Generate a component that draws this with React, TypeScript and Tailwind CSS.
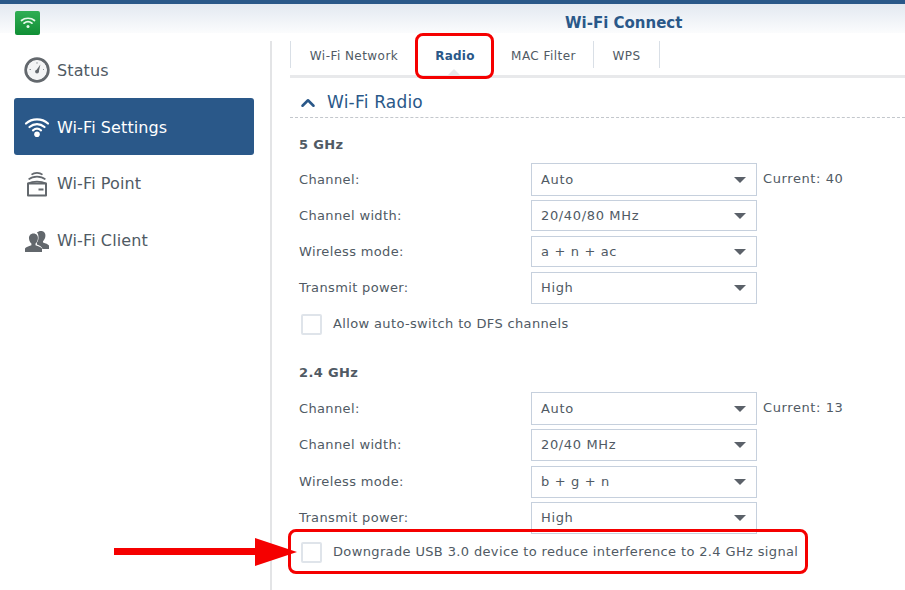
import { ChevronUp } from "lucide-react";

function Gauge() {
  return (
    <svg width="26" height="26" viewBox="0 0 26 26" fill="none">
      <circle cx="13" cy="13" r="11.3" stroke="#63686d" strokeWidth="2.8" />
      <circle cx="13" cy="13" r="9.6" fill="#f3f4f5" />
      <path d="M11.6 14.2 16.4 7.6 14.6 15.2Z" fill="#63686d" />
      <circle cx="13" cy="14.6" r="1.9" fill="#63686d" />
      <path d="M5.5 12.5h1.5M13 5.2v1.5M20 12.5h-1" stroke="#8b9095" strokeWidth="1" />
    </svg>
  );
}

function WifiIcon() {
  return (
    <svg width="26" height="22" viewBox="0 0 26 22" fill="none" stroke="#fff" strokeWidth="2.2" strokeLinecap="round">
      <path d="M2 7.5C8 2 18 2 24 7.5" />
      <path d="M5.5 11C10 7.2 16 7.2 20.5 11" />
      <path d="M9 14.3C11.4 12.4 14.6 12.4 17 14.3" />
      <circle cx="13" cy="18.2" r="2.8" fill="#fff" stroke="none" />
    </svg>
  );
}

function PointIcon() {
  return (
    <svg width="22" height="26" viewBox="0 0 22 26" fill="none">
      <path d="M5.5 3.6C8.5 1.2 13.5 1.2 16.5 3.6" stroke="#63686d" strokeWidth="1.7" />
      <path d="M2.6 8.4C7 4.8 15 4.8 19.4 8.4" stroke="#63686d" strokeWidth="1.7" />
      <path d="M2 12.5V24.6H20V12.5Z" stroke="#63686d" strokeWidth="2" strokeLinejoin="round" fill="#fff" />
      <path d="M2 12.5C7 10 15 10 20 12.5" stroke="#63686d" strokeWidth="1.6" />
      <rect x="12.5" y="17.5" width="5" height="2" fill="#63686d" />
    </svg>
  );
}

function ClientIcon() {
  return (
    <svg width="24" height="22" viewBox="0 0 24 22" fill="#62676c">
      <path d="M16 1c3 0 4.6 2.2 4.4 5-.2 2.4-1.2 4.2-2.4 5.2v1.4c2.6.8 5.2 1.8 6 3V19h-6.5c-.4-2-3-3.4-5.6-4.4v-2.2c1.2-1.2 1.6-3 1.6-5 0-2.2-.6-3.8-1.6-4.8C13 1.6 14.4 1 16 1Z" />
      <path d="M8.5 3.4c3 0 4.6 2.2 4.4 5-.2 2.4-1.2 4.2-2.4 5.2v1.6c2.8.8 5.6 2 6.5 3.2V22H0v-3.6c.9-1.2 3.6-2.4 6.4-3.2v-1.6C5.2 12.6 4.2 10.8 4 8.4c-.2-2.8 1.5-5 4.5-5Z" />
    </svg>
  );
}

function SideItem({ icon, label, active, cls, textCls }: { icon: React.ReactNode; label: string; active?: boolean; cls: string; textCls?: string }) {
  return (
    <div className={`flex items-center rounded-[3px] w-[240px] ${cls} ${active ? "bg-[#2a5889] text-white" : "text-[#505a64]"}`}>
      <div className="w-[43px] flex justify-center pl-[2px] shrink-0">{icon}</div>
      <span className={`text-[16px] tracking-[0.1px] ${textCls ?? ""}`}>{label}</span>
    </div>
  );
}

function Row({ label, value, cls, current }: { label: string; value: string; cls: string; current?: string }) {
  return (
    <div className={`flex items-center ${cls}`}>
      <div className="w-[241px] pl-[9px] text-[#505a64]">{label}</div>
      <div className="w-[226px] h-full border border-[#c6d0dd] flex items-center justify-between pl-[9px] pr-[10px] text-[#505a64]">
        <span className="tracking-[0.65px]">{value}</span>
        <span className="w-0 h-0 border-x-[6px] border-x-transparent border-t-[6px] border-t-[#5b6169]" />
      </div>
      {current && <div className="ml-[6px] text-[#505a64] -mt-[2px] tracking-[0.6px]">{current}</div>}
    </div>
  );
}

function Check({ label, cls }: { label: string; cls: string }) {
  return (
    <div className={`flex items-center pl-[11px] ${cls}`}>
      <span className="w-[21px] h-[21px] border-2 border-[#dfe4ea] rounded-[2px] bg-white shrink-0" />
      <span className="ml-[11px] text-[#505a64]">{label}</span>
    </div>
  );
}

function Tab({ label, cls }: { label: string; cls: string }) {
  return (
    <div className={`h-[27px] pt-[2px] flex items-center justify-center text-[12px] tracking-[0.45px] text-[#505a64] border-l border-[#d9dfe6] ${cls}`}>{label}</div>
  );
}

export default function App() {
  return (
    <div className="relative w-[905px] h-[590px] overflow-hidden bg-white font-['DejaVu_Sans','Liberation_Sans',sans-serif] text-[13px] tracking-[0.36px]">
      {/* Title bar */}
      <div className="h-[4px] bg-[#2a5889]" />
      <div className="relative h-[29px] bg-gradient-to-b from-[#e3e9f1] to-[#fbfcfd]">
        <div className="absolute left-[15px] top-[7px] w-[25px] h-[24px] rounded-[2px] bg-gradient-to-b from-[#2fae54] to-[#0f8f35] flex items-center justify-center">
          <svg width="18" height="14" viewBox="0 0 18 14" fill="none" stroke="#e8f8ea" strokeWidth="1.7" strokeLinecap="round">
            <path d="M2.5 4.5C6 1.5 12 1.5 15.5 4.5" />
            <path d="M5 7.2C7.4 5.4 10.6 5.4 13 7.2" />
            <circle cx="9" cy="10.5" r="1.5" fill="#e8f8ea" stroke="none" />
          </svg>
        </div>
        <div className="pl-[565px] pt-[9px] text-[15px] leading-[20px] font-bold tracking-normal text-[#2a5889]">Wi-Fi Connect</div>
      </div>

      <div className="flex pt-[8px]">
        {/* Sidebar */}
        <div className="w-[272px] h-[549px] border-r-2 border-[#e3e4e6] pl-[14px] shrink-0">
          <SideItem cls="h-[57px]" textCls="pt-[2px]" icon={<Gauge />} label="Status" />
          <SideItem cls="h-[57px]" textCls="pt-[2px]" active icon={<WifiIcon />} label="Wi-Fi Settings" />
          <SideItem cls="h-[57px]" icon={<PointIcon />} label="Wi-Fi Point" />
          <SideItem cls="h-[57px]" icon={<ClientIcon />} label="Wi-Fi Client" />
        </div>

        {/* Content */}
        <div className="flex-1 pl-[18px]">
          <div className="h-[37px] border-b-[3px] border-[#e8e9eb] w-[615px] relative flex items-start">
            <Tab label="Wi-Fi Network" cls="w-[127px]" />
            <div className="w-[76px] h-[29px] flex items-center justify-center font-bold text-[#2a5889] text-[12px] tracking-[0.2px]">Radio</div>
            <Tab label="MAC Filter" cls="w-[100px]" />
            <Tab label="WPS" cls="w-[67px] border-r border-[#d9dfe6]" />
            <span className="absolute left-[158px] bottom-0 w-0 h-0 border-x-[6px] border-x-transparent border-b-[6px] border-b-[#e8e9eb]" />
          </div>

          <div className="h-[40px] border-b border-dashed border-[#c3c7cc] w-[615px] flex items-center pl-[9px] pt-[10px] text-[#2a5889]">
            <ChevronUp size={22} strokeWidth={2.8} className="-ml-[2px]" />
            <span className="ml-[8px] text-[17px] tracking-[0.2px]">Wi-Fi Radio</span>
          </div>

          <div className="h-[45px] pl-[9px] pt-[17px] font-bold text-[#505a64]">5 GHz</div>
          <Row cls="h-[33px] mb-[4px]" label="Channel:" value="Auto" current="Current: 40" />
          <Row cls="h-[31px] mb-[5px]" label="Channel width:" value="20/40/80 MHz" />
          <Row cls="h-[31px] mb-[5px]" label="Wireless mode:" value="a + n + ac" />
          <Row cls="h-[32px] mb-[5px]" label="Transmit power:" value="High" />
          <Check cls="h-[30px]" label="Allow auto-switch to DFS channels" />

          <div className="h-[53px] pl-[9px] pt-[24px] font-bold text-[#505a64]">2.4 GHz</div>
          <Row cls="h-[33px] mb-[4px]" label="Channel:" value="Auto" current="Current: 13" />
          <Row cls="h-[32px] mb-[5px]" label="Channel width:" value="20/40 MHz" />
          <Row cls="h-[32px] mb-[4px]" label="Wireless mode:" value="b + g + n" />
          <Row cls="h-[32px] mb-[3px]" label="Transmit power:" value="High" />
          <Check cls="h-[30px]" label="Downgrade USB 3.0 device to reduce interference to 2.4 GHz signal" />
        </div>
      </div>

      {/* Annotations */}
      <div className="absolute left-[415px] top-[33px] w-[79px] h-[46px] border-[3px] border-[#f50000] rounded-[8px]" />
      <div className="absolute left-[288px] top-[529px] w-[520px] h-[45px] border-[3px] border-[#f50000] rounded-[8px]" />
      <div className="absolute left-[114px] top-[548px] w-[142px] h-[7px] bg-[#f50000]" />
      <div className="absolute left-[255px] top-[538px] w-0 h-0 border-y-[14px] border-y-transparent border-l-[42px] border-l-[#f50000]" />
    </div>
  );
}
